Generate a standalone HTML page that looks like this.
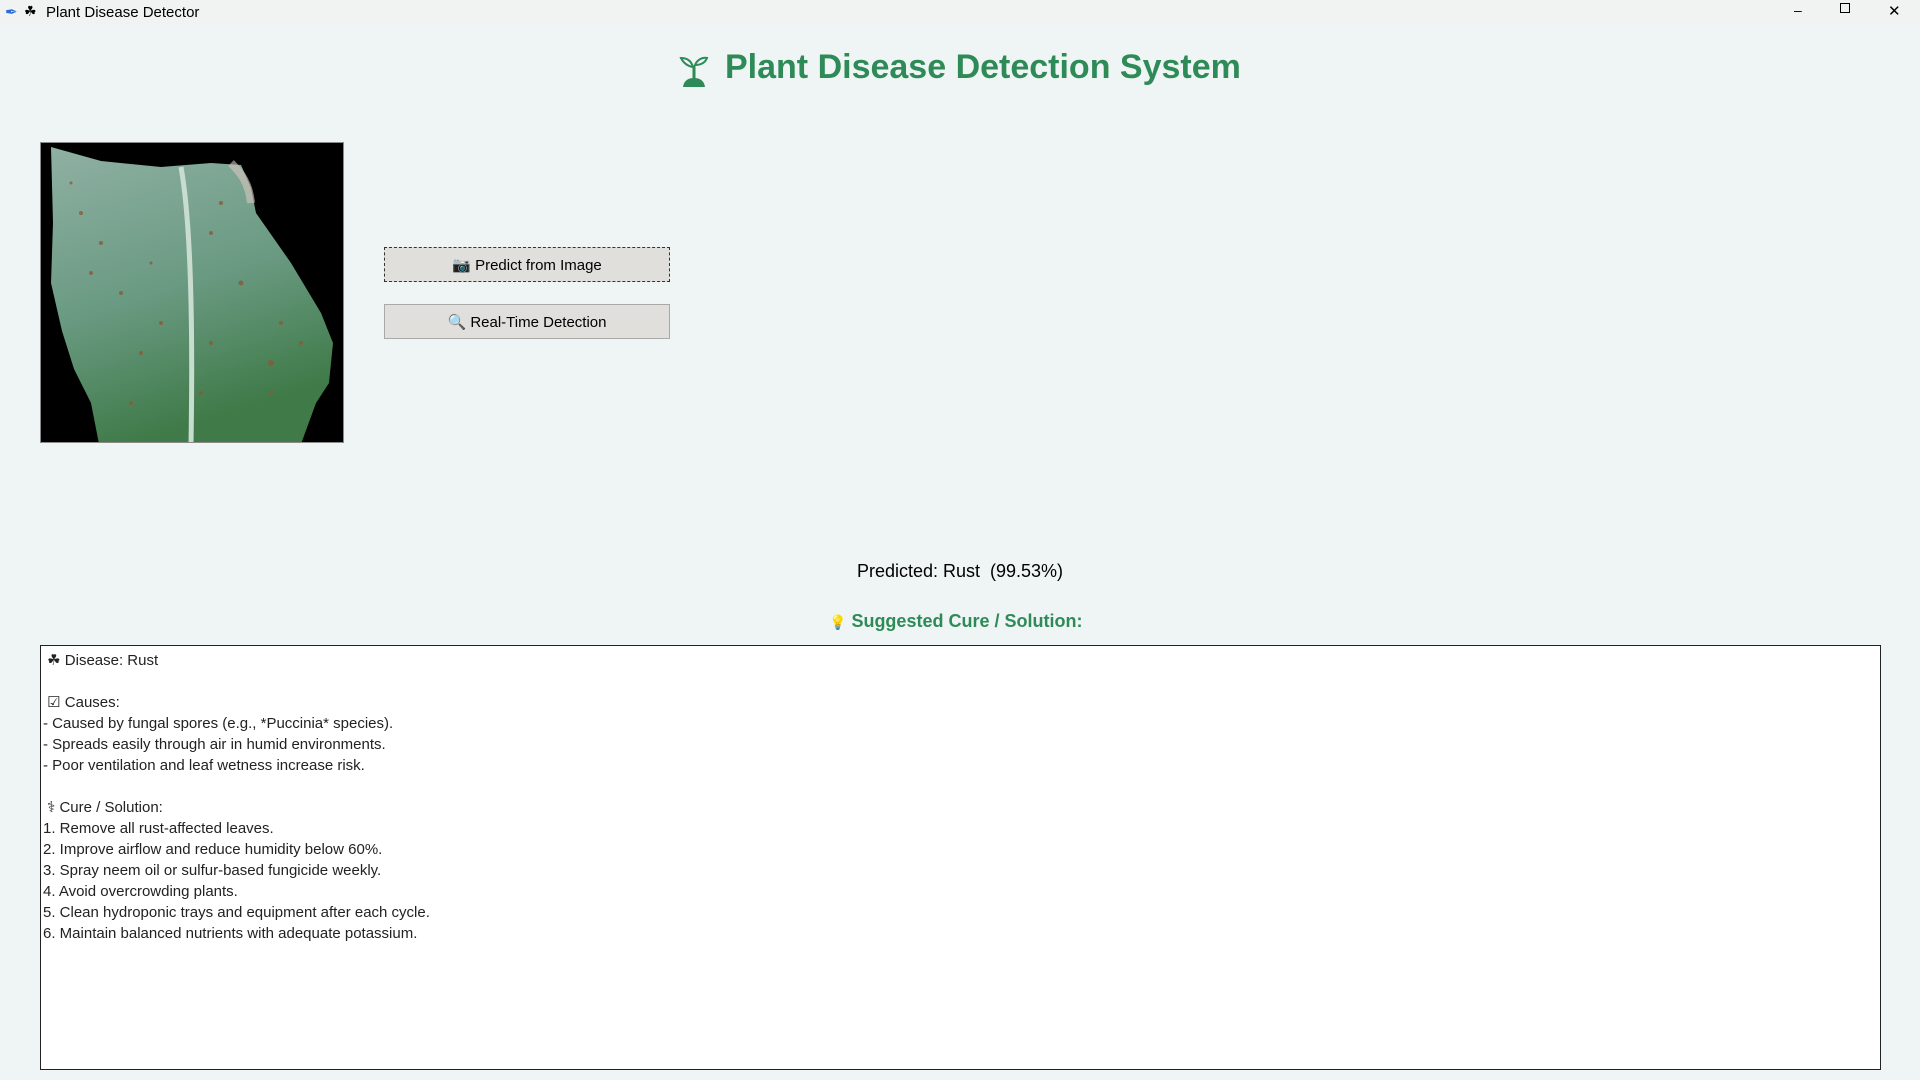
<!DOCTYPE html>
<html><head><meta charset="utf-8"><style>
body{margin:0;width:1920px;height:1080px;background:#eff5f5;font-family:"Liberation Sans",sans-serif;position:relative;overflow:hidden}
.tb{position:absolute;left:0;top:0;width:1920px;height:25px;background:#f1f3f3;font-size:15px}
.tb .t{position:absolute;left:46px;top:4px;color:#000}
.ab{position:absolute}
h1{position:absolute;margin:0;left:725px;top:48px;font-size:34px;font-weight:bold;color:#2e8b57;white-space:nowrap}
.btn{position:absolute;left:384px;width:286px;height:35px;background:#e0dfdc;border:1px solid #a9a9a9;font-size:15px;text-align:center;line-height:35px;box-sizing:border-box}
.box{position:absolute;left:40px;top:645px;width:1841px;height:425px;border:1px solid #222;background:#fff;box-sizing:border-box;padding:4px 0 0 2px;font-size:15px;line-height:21px;color:#222}
</style></head><body>
<div class="tb"><span class="ab" style="left:5px;top:3px;color:#2a6bd1">&#x2712;</span><span class="ab" style="left:24px;top:3px;font-size:14px">&#x2618;</span><span class="t">Plant Disease Detector</span>
<span class="ab" style="left:1794px;top:2px;font-size:14px">&#x2013;</span>
<span class="ab" style="left:1840px;top:3px;width:8px;height:8px;border:1px solid #000"></span>
<span class="ab" style="left:1888px;top:2px;font-size:15px">&#x2715;</span></div>
<svg class="ab" style="left:677px;top:52px" width="34" height="36" viewBox="0 0 34 36"><path d="M17 14V30" stroke="#2e8b57" stroke-width="3"/><path d="M16 15C10 14 6 10 4 6C9 6 14 8 16 15Z" fill="none" stroke="#2e8b57" stroke-width="2"/><path d="M18 13C20 8 25 5 30 6C28 11 24 13 18 13Z" fill="none" stroke="#2e8b57" stroke-width="2"/><path d="M6 35C7 28 12 26 17 26C22 26 27 28 28 35Z" fill="#2e8b57"/></svg>
<h1>Plant Disease Detection System</h1>
<div class="ab" style="left:40px;top:142px;width:304px;height:301px;border:1px solid #8a8a8a;background:#000;box-sizing:border-box;overflow:hidden">
<svg width="304" height="301" viewBox="0 0 304 301"><defs><linearGradient id="g" x1="0" y1="0" x2="0.3" y2="1"><stop offset="0" stop-color="#8fb0a3"/><stop offset="0.55" stop-color="#6a9a82"/><stop offset="1" stop-color="#3f7a48"/></linearGradient></defs>
<path d="M10 4L60 18L120 24L170 20L200 22L210 45L215 70L250 120L280 170L292 200L288 240L275 260L260 301L58 301L50 260L33 226L21 188L10 140L12 80Z" fill="url(#g)"/>
<path d="M190 20C200 30 208 40 210 60" stroke="#d8c4c0" stroke-width="8" fill="none" opacity="0.6"/>
<path d="M140 24C150 80 152 180 150 301" stroke="#c8dcd0" stroke-width="5" fill="none"/>
<g fill="#8a5a3a" opacity="0.8"><circle cx="40" cy="70" r="2"/><circle cx="60" cy="100" r="2"/><circle cx="170" cy="90" r="2"/><circle cx="200" cy="140" r="2.5"/><circle cx="240" cy="180" r="2"/><circle cx="80" cy="150" r="2"/><circle cx="170" cy="200" r="2"/><circle cx="230" cy="220" r="3"/><circle cx="100" cy="210" r="2"/><circle cx="160" cy="250" r="2"/><circle cx="50" cy="130" r="2"/><circle cx="180" cy="60" r="2"/><circle cx="110" cy="120" r="1.5"/><circle cx="230" cy="250" r="2"/><circle cx="30" cy="40" r="1.5"/><circle cx="260" cy="200" r="2"/><circle cx="120" cy="180" r="2"/><circle cx="90" cy="260" r="2"/></g></svg></div>
<div class="btn" style="top:247px;border:1px dashed #333">&#x1F4F7; Predict from Image</div>
<div class="btn" style="top:304px">&#x1F50D; Real-Time Detection</div>
<div class="ab" style="left:0;width:1920px;top:561px;text-align:center;font-size:18px;color:#000">Predicted: Rust&nbsp; (99.53%)</div>
<div class="ab" style="left:829px;top:611px;font-size:18px;font-weight:bold;color:#2e8b57;white-space:nowrap"><span style="font-size:14px">&#x1F4A1;</span> Suggested Cure / Solution:</div>
<div class="box">&nbsp;&#x2618; Disease: Rust<br><br>&nbsp;&#x2611; Causes:<br>- Caused by fungal spores (e.g., *Puccinia* species).<br>- Spreads easily through air in humid environments.<br>- Poor ventilation and leaf wetness increase risk.<br><br>&nbsp;&#x2695; Cure / Solution:<br>1. Remove all rust-affected leaves.<br>2. Improve airflow and reduce humidity below 60%.<br>3. Spray neem oil or sulfur-based fungicide weekly.<br>4. Avoid overcrowding plants.<br>5. Clean hydroponic trays and equipment after each cycle.<br>6. Maintain balanced nutrients with adequate potassium.</div>
</body></html>
